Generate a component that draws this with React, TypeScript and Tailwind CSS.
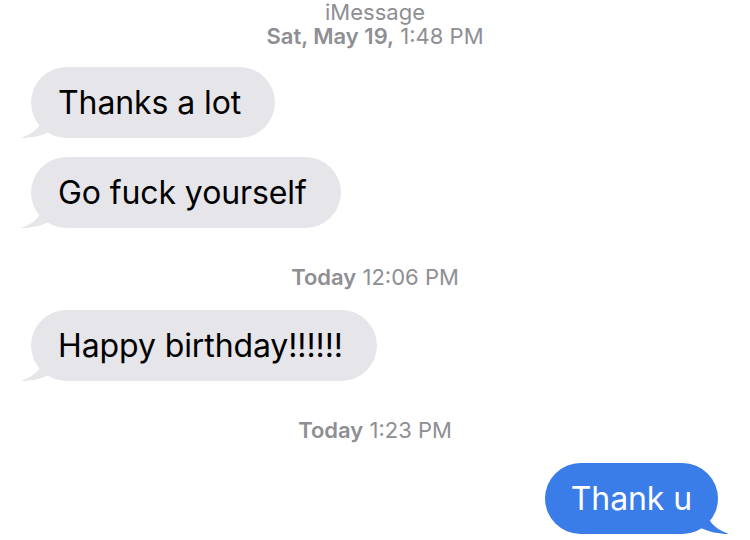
const font = { fontFamily: 'Inter, "Liberation Sans", Arial, sans-serif' };

function TailLeft() {
  return (
    <svg
      className="absolute left-[-10px] bottom-0"
      width="30"
      height="26"
      viewBox="0 0 30 26"
    >
      <path d="M22 0 C22 11 17 20 0 26 C10 26 20 24 30 19 L30 0 Z" fill="#e5e5ea" />
    </svg>
  );
}

function TailRight() {
  return (
    <svg
      className="absolute right-[-11px] bottom-0"
      width="30"
      height="26"
      viewBox="0 0 30 26"
    >
      <path d="M8 0 C8 11 13 20 30 26 C20 26 10 24 0 19 L0 0 Z" fill="#3a7ce8" />
    </svg>
  );
}

function Received({ text, className }: { text: string; className?: string }) {
  return (
    <div className={"flex " + (className ?? "")}>
      <div className="relative ml-[31px] h-[71px] rounded-[36px] bg-[#e5e5ea] pl-[27px] pr-[34px] flex items-center">
        <TailLeft />
        <span className="relative text-[32px] text-black tracking-[-0.1px]">{text}</span>
      </div>
    </div>
  );
}

function Stamp({ day, time, className }: { day: string; time: string; className?: string }) {
  return (
    <p className={"text-center text-[22px] leading-6 text-[#8e8e93] " + (className ?? "")}>
      <span className="font-semibold">{day}</span> {time}
    </p>
  );
}

export default function App() {
  return (
    <div className="w-[750px] h-[540px] bg-white overflow-hidden flex flex-col" style={font}>
      <p className="text-center text-[22px] leading-6 text-[#8e8e93]">iMessage</p>
      <Stamp day="Sat, May 19," time="1:48 PM" />
      <Received text="Thanks a lot" className="mt-[19px]" />
      <Received text="Go fuck yourself" className="mt-[19px]" />
      <Stamp day="Today" time="12:06 PM" className="mt-[37px]" />
      <Received text="Happy birthday!!!!!!" className="mt-[21px]" />
      <Stamp day="Today" time="1:23 PM" className="mt-[37px]" />
      <div className="flex justify-end mt-[21px]">
        <div className="relative mr-[32px] h-[71px] rounded-[36px] bg-[#3a7ce8] pl-[26px] pr-[26px] flex items-center">
          <TailRight />
          <span className="relative text-[32px] text-white tracking-[-0.1px]">Thank u</span>
        </div>
      </div>
    </div>
  );
}
